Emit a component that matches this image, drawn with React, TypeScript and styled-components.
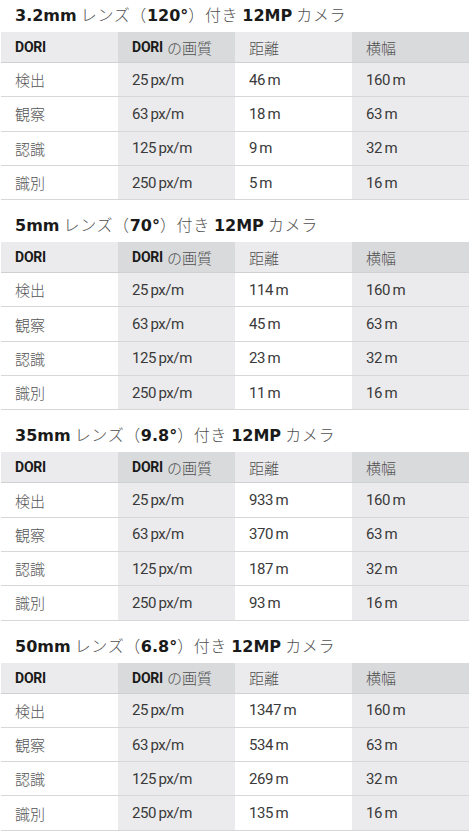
import React from 'react'
import styled, { createGlobalStyle } from 'styled-components'

const GlobalStyle = createGlobalStyle`
  body {
    margin: 0;
    background: #ffffff;
    font-family: Roboto, "Noto Sans CJK JP", sans-serif;
  }
`

const Page = styled.div`
  width: 471px;
  display: flex;
  flex-direction: column;
  gap: 10px;
`

const Section = styled.section`
  display: flex;
  flex-direction: column;
`

const Title = styled.h2`
  margin: 0;
  height: 32px;
  padding: 0 0 0 15px;
  line-height: 28px;
  font-size: 16px;
  font-weight: 300;
  color: #505050;
  letter-spacing: 0.6px;
  font-family: "Noto Sans CJK JP", sans-serif;
  white-space: nowrap;
`

const TitleStrong = styled.b`
  font-family: "DejaVu Sans", "Noto Sans CJK JP", sans-serif;
  font-weight: 700;
  font-size: 16px;
  letter-spacing: 0;
  color: #1a1a1a;
`

const Table = styled.div`
  display: grid;
  grid-template-columns: repeat(4, 117px);
  width: 468px;
  margin-left: 1px;
`

const shades = {
  white: '#ffffff',
  light: '#ebebed',
  dark: '#d9dadc',
}

type Shade = keyof typeof shades

const HeadCell = styled.div<{ $shade: Shade }>`
  box-sizing: border-box;
  height: 31px;
  padding-left: 14px;
  display: flex;
  align-items: center;
  background: ${p => shades[p.$shade]};
  border-bottom: 1px solid #cfd0d2;
  font-size: 15px;
  color: #505050;
  font-family: "Noto Sans CJK JP", sans-serif;
  font-weight: 300;
  white-space: nowrap;
`

const HeadStrong = styled.b`
  font-family: Roboto, sans-serif;
  font-weight: 700;
  font-size: 14px;
  color: #1a1a1a;
  letter-spacing: -0.2px;
  margin-right: 4px;
`

const Cell = styled.div<{ $shade: Shade; $jp?: boolean }>`
  box-sizing: border-box;
  height: 34.3px;
  padding-left: 14px;
  display: flex;
  align-items: center;
  background: ${p => shades[p.$shade]};
  border-bottom: 1px solid #d6d7d9;
  font-family: ${p => (p.$jp ? '"Noto Sans CJK JP", sans-serif' : 'Roboto, sans-serif')};
  font-weight: ${p => (p.$jp ? 300 : 400)};
  font-size: 15px;
  color: ${p => (p.$jp ? '#555555' : '#3a3a3a')};
  letter-spacing: ${p => (p.$jp ? '0' : '-0.4px')};
  word-spacing: -1px;
  white-space: nowrap;
`

type Lens = {
  mm: string
  angle: string
  dist: string[]
}

const lenses: Lens[] = [
  { mm: '3.2mm', angle: '120°', dist: ['46 m', '18 m', '9 m', '5 m'] },
  { mm: '5mm', angle: '70°', dist: ['114 m', '45 m', '23 m', '11 m'] },
  { mm: '35mm', angle: '9.8°', dist: ['933 m', '370 m', '187 m', '93 m'] },
  { mm: '50mm', angle: '6.8°', dist: ['1347 m', '534 m', '269 m', '135 m'] },
]

const levels = ['検出', '観察', '認識', '識別']
const quality = ['25 px/m', '63 px/m', '125 px/m', '250 px/m']
const widths = ['160 m', '63 m', '32 m', '16 m']

export default function App() {
  return (
    <>
      <GlobalStyle />
      <Page>
        {lenses.map(lens => (
          <Section key={lens.mm}>
            <Title>
              <TitleStrong>{lens.mm}</TitleStrong> レンズ（<TitleStrong>{lens.angle}</TitleStrong>）付き{' '}
              <TitleStrong>12MP</TitleStrong> カメラ
            </Title>
            <Table>
              <HeadCell $shade="light"><HeadStrong>DORI</HeadStrong></HeadCell>
              <HeadCell $shade="dark"><HeadStrong>DORI</HeadStrong>の画質</HeadCell>
              <HeadCell $shade="light">距離</HeadCell>
              <HeadCell $shade="dark">横幅</HeadCell>
              {levels.map((lv, i) => (
                <React.Fragment key={lv}>
                  <Cell $shade="white" $jp>{lv}</Cell>
                  <Cell $shade="light">{quality[i]}</Cell>
                  <Cell $shade="white">{lens.dist[i]}</Cell>
                  <Cell $shade="light">{widths[i]}</Cell>
                </React.Fragment>
              ))}
            </Table>
          </Section>
        ))}
      </Page>
    </>
  )
}
